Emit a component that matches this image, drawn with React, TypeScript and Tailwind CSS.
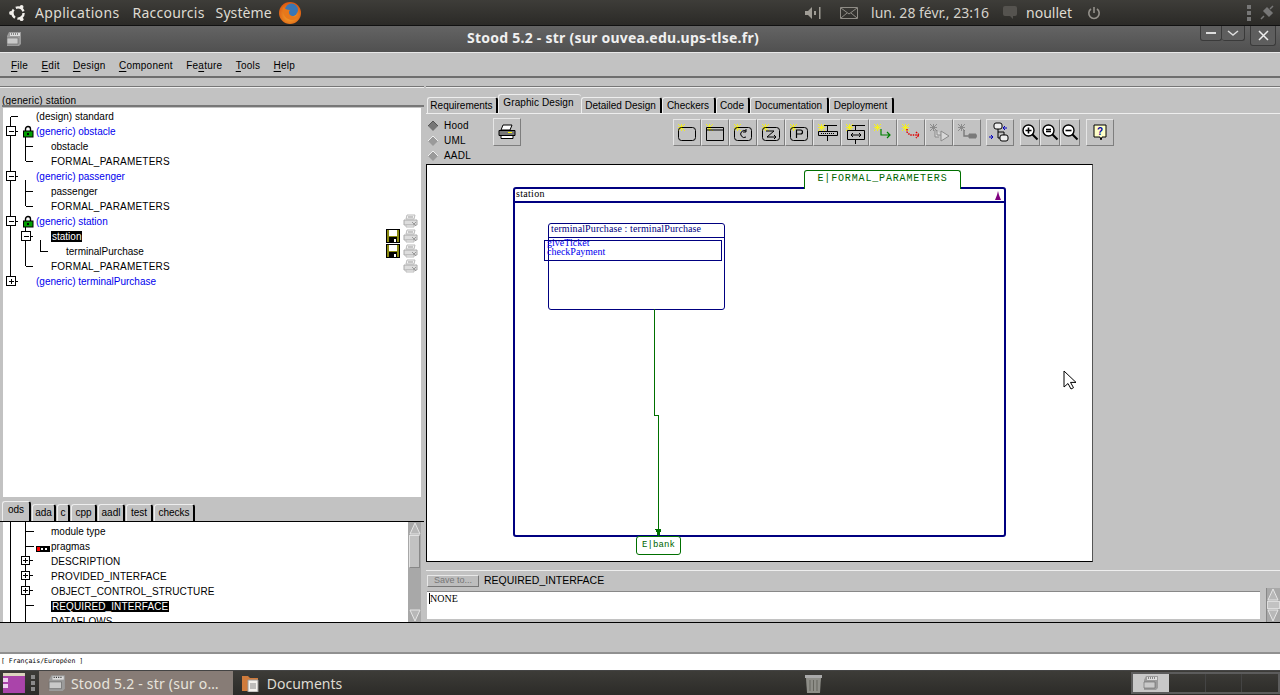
import type { ReactNode } from 'react'

const SANS = "font-['Liberation_Sans',sans-serif]"

const Ubuntu = () => (
  <svg width="20" height="20" viewBox="0 0 20 20" className="shrink-0">
    <circle cx="10" cy="10" r="5.6" fill="none" stroke="#f2f0ec" strokeWidth="2.4" strokeDasharray="9.2 2.53" />
    <circle cx="3" cy="10" r="1.9" fill="#f2f0ec" />
    <circle cx="13.6" cy="3.8" r="1.9" fill="#f2f0ec" />
    <circle cx="13.6" cy="16.2" r="1.9" fill="#f2f0ec" />
  </svg>
)

const Firefox = () => (
  <svg width="24" height="24" viewBox="0 0 24 24">
    <defs>
      <radialGradient id="ffo" cx="0.5" cy="0.6" r="0.6">
        <stop offset="0" stopColor="#f9b233" />
        <stop offset="1" stopColor="#d9540f" />
      </radialGradient>
    </defs>
    <circle cx="12" cy="12" r="11" fill="url(#ffo)" />
    <circle cx="13.5" cy="9" r="6.5" fill="#3a76b5" />
    <path d="M5 6c-1 5 1 12 8 13 5 .5 8-3 9-7-2 3-5 4-8 3-3-1-4-4-2-6-3 0-5-1-7-3z" fill="#e8781a" />
  </svg>
)

const TopPanel = () => (
  <div className="flex h-[26px] shrink-0 items-center border-b border-[#111] bg-gradient-to-b from-[#3e3d39] to-[#2b2a27] font-['Noto_Sans',sans-serif] text-[14px] text-[#dfdbd2]">
    <div className="ml-[8px]"><Ubuntu /></div>
    <span className="ml-[7px] tracking-[0.33px]">Applications</span>
    <span className="ml-[13px] tracking-[0.25px]">Raccourcis</span>
    <span className="ml-[11px] tracking-[0.1px]">Système</span>
    <div className="ml-[6px]"><Firefox /></div>
    <div className="ml-auto flex items-center">
      <svg width="16" height="14" viewBox="0 0 16 14" className="text-[#a09d96]">
        <path d="M0 5h3l4-4v12l-4-4H0zM9 5h2v4H9zM14 1h1.500v12H14z" fill="currentColor" />
      </svg>
      <svg width="18" height="12" viewBox="0 0 18 12" className="ml-[19px]">
        <path d="M.5.5h17v11H.500zM1 1l8 6 8-6M1 11l6-5M17 11l-6-5" fill="none" stroke="#8f8c86" />
      </svg>
      <span className="ml-[13px] text-[#d5d2cb]">lun. 28 févr., 23:16</span>
      <svg width="16" height="15" viewBox="0 0 16 15" className="ml-[13px]">
        <path d="M3 1h10a2 2 0 0 1 2 2v6a2 2 0 0 1-2 2h-2v3l-3-3H3a2 2 0 0 1-2-2V3a2 2 0 0 1 2-2z" fill="#55534f" />
      </svg>
      <span className="ml-[8px]">noullet</span>
      <svg width="14" height="14" viewBox="0 0 14 14" className="ml-[15px] mr-[5px]">
        <path d="M4 3a5.200 5.200 0 1 0 6 0M7 1v6" fill="none" stroke="#94918b" strokeWidth="1.600" />
      </svg>
      <div className="ml-[141px] mr-[5px] flex items-center gap-[8px]">
        <svg width="4" height="16" viewBox="0 0 4 16"><path d="M0 0h4v4H0zM0 6h4v4H0zM0 12h4v4H0z" fill="#777" /></svg>
        <svg width="16" height="16" viewBox="0 0 16 16">
          <path d="M2 14l3-3M5 6l5 5 3-3-5-5zM11 4l3-3" fill="#777" stroke="#777" strokeWidth="1.500" />
        </svg>
      </div>
    </div>
  </div>
)

const WindowIcon = ({ size = 16 }: { size?: number }) => (
  <svg width={size} height={size} viewBox="0 0 16 16">
    <path d="M3 1h12v12l-2 2H1V5z" fill="#9b9b9b" />
    <path d="M4 2h10v3H4z" fill="#ddd" />
    <path d="M5 3h8" stroke="#333" strokeDasharray="1 1" />
    <path d="M1 7h11v6H1z" fill="#c9c9c9" stroke="#666" strokeWidth=".6" />
  </svg>
)

const TitleBar = () => (
  <div className="relative flex h-[26px] shrink-0 items-center bg-gradient-to-b from-[#646464] to-[#505050]">
    <div className="ml-[6px]"><WindowIcon /></div>
    <span className="absolute left-0 right-[54px] top-[3px] text-center font-['Noto_Sans',sans-serif] text-[14px] font-bold leading-[18px] tracking-[0.24px] text-[#f0f0f0]">
      Stood 5.2 - str (sur ouvea.edu.ups-tlse.fr)
    </span>
    <div className="ml-auto mr-[4px] flex items-start self-start">
      <div className="flex h-[15px] w-[22px] items-center justify-center rounded-b-[3px] border border-t-0 border-[#3a3a3a] bg-[#5e5e5e]">
        <div className="h-[2px] w-[10px] bg-[#ddd]" />
      </div>
      <div className="flex h-[15px] w-[23px] items-center justify-center rounded-b-[3px] border border-l-0 border-t-0 border-[#3a3a3a] bg-[#5e5e5e]">
        <svg width="12" height="7" viewBox="0 0 12 7"><path d="M1 1l5 4 5-4" fill="none" stroke="#ddd" strokeWidth="1.500" /></svg>
      </div>
      <div className="ml-[5px] flex h-[20px] w-[26px] items-center justify-center rounded-b-[3px] border border-t-0 border-[#3a3a3a] bg-[#5e5e5e]">
        <svg width="11" height="11" viewBox="0 0 11 11"><path d="M1 1l9 9M10 1l-9 9" stroke="#eee" strokeWidth="1.500" /></svg>
      </div>
    </div>
  </div>
)

const MENUS: [string, string, string][] = [
  ['', 'F', 'ile'],
  ['', 'E', 'dit'],
  ['', 'D', 'esign'],
  ['', 'C', 'omponent'],
  ['Fe', 'a', 'ture'],
  ['', 'T', 'ools'],
  ['', 'H', 'elp'],
]

const MenuBar = () => (
  <div className="flex h-[26px] shrink-0 items-center gap-[13.300px] border-t border-[#e8e8e8] border-b-2 border-b-[#6e6e6e] bg-[#c2c2c2] pl-[11px] pt-[2px] text-[10px] tracking-[0.25px] text-black">
    {MENUS.map(([a, u, b]) => (
      <span key={u}>
        {a}
        <span className="underline underline-offset-2">{u}</span>
        {b}
      </span>
    ))}
  </div>
)

// arbre du haut : level donne le retrait du texte
const TREE = [
  { t: '(design) standard', l: 1 },
  { t: '(generic) obstacle', l: 1, blue: true },
  { t: 'obstacle', l: 2 },
  { t: 'FORMAL_PARAMETERS', l: 2, caps: true },
  { t: '(generic) passenger', l: 1, blue: true },
  { t: 'passenger', l: 2 },
  { t: 'FORMAL_PARAMETERS', l: 2, caps: true },
  { t: '(generic) station', l: 1, blue: true },
  { t: 'station', l: 2, sel: true },
  { t: 'terminalPurchase', l: 3 },
  { t: 'FORMAL_PARAMETERS', l: 2, caps: true },
  { t: '(generic) terminalPurchase', l: 1, blue: true },
]

const PADS: Record<number, string> = { 1: 'pl-[33px]', 2: 'pl-[48px]', 3: 'pl-[63px]' }

const TreeBox = ({ x, y, plus }: { x: number; y: number; plus?: boolean }) => (
  <g>
    <rect x={x - 4.5} y={y - 4.5} width="9" height="9" fill="#fff" stroke="#000" />
    <path d={`M${x - 2} ${y + 0.5}h5M${x + 5} ${y + 0.5}h2`} stroke="#000" />
    {plus && <path d={`M${x + 0.5} ${y - 2}v5`} stroke="#000" />}
  </g>
)

const Lock = ({ x, y }: { x: number; y: number }) => (
  <g transform={`translate(${x} ${y})`}>
    <path d="M2.500 5V3a2.500 2.500 0 0 1 5 0v2" fill="none" stroke="#000" strokeWidth="1.400" />
    <rect x="0.500" y="5" width="9.500" height="6" fill="#00a000" stroke="#000" />
    <path d="M4 7h2v2H4z" fill="#000" />
  </g>
)

const TreeLines = () => (
  <svg width="60" height="190" viewBox="0 0 60 190" className="absolute left-[-3px] top-0">
    <g shapeRendering="crispEdges" stroke="#000" fill="none">
      {/* coordonnees relatives au haut de l'arbre (y=108) */}
      <path d="M10.500 9v167M11 8.500h7" />
      <path d="M25.500 27v26M26 38.500h7M26 53.500h7" />
      <path d="M25.500 72v26M26 83.500h7M26 98.500h7" />
      <path d="M25.500 117v41M26 158.500h7M40.500 132v12M41 143.500h7" />
    </g>
    <g shapeRendering="crispEdges">
      <TreeBox x={11} y={23} />
      <TreeBox x={11} y={68} />
      <TreeBox x={11} y={113} />
      <TreeBox x={26} y={128} />
      <TreeBox x={11} y={173} plus />
    </g>
    <Lock x={23} y={18} />
    <Lock x={23} y={108} />
  </svg>
)

const Floppy = () => (
  <svg width="14" height="14" viewBox="0 0 14 14" shapeRendering="crispEdges">
    <path d="M0 0h14v14H0z" fill="#000" />
    <path d="M1 1h12v12H1z" fill="#8a8a10" />
    <path d="M3 1h8v6H3z" fill="#fff" />
    <path d="M3 8h8v5H3z" fill="#000" />
    <path d="M8 10h2v3H8z" fill="#fff" />
  </svg>
)

const GhostPrinter = () => (
  <svg width="15" height="14" viewBox="0 0 15 14">
    <path d="M4 1h8l-1 4H3z" fill="#f4f4f4" stroke="#bbb" />
    <path d="M1 6h13v5H1z" fill="#ddd" stroke="#aaa" />
    <path d="M5 3h5M9 8l4 4M13 8l-4 4" stroke="#999" />
    <path d="M3 11h8v2H3z" fill="#f4f4f4" stroke="#bbb" />
  </svg>
)

const Tree = () => (
  <div className="relative ml-[3px] h-[389px] w-[418px] shrink-0 overflow-hidden bg-white pt-px">
    <TreeLines />
    <div className="relative text-[10px] leading-[15px] text-black">
      {TREE.map((r, i) => (
        <div key={i} className={`h-[15px] whitespace-nowrap ${PADS[r.l]} ${r.blue ? 'text-[#0000ee]' : ''} ${r.caps ? 'tracking-[0.2px]' : ''}`}>
          <span className={r.sel ? 'bg-black px-[1px] text-white' : ''}>{r.t}</span>
        </div>
      ))}
    </div>
    <div className="absolute left-[400px] top-[106px] flex flex-col">
      {[0, 1, 2, 3].map((i) => (
        <div key={i} className="h-[15px]"><GhostPrinter /></div>
      ))}
    </div>
    <div className="absolute left-[383px] top-[121px] flex flex-col gap-px">
      <Floppy />
      <Floppy />
    </div>
  </div>
)

const SmallTab = ({ children, w, on }: { children: ReactNode; w: string; on?: boolean }) => (
  <div className={`flex ${w} items-center justify-center rounded-t-[3px] border-l border-t border-r-2 border-[#eee] border-r-black text-[10px] leading-none ${on ? 'h-[20px] border-r-[#888] pb-[3px]' : 'h-[17px]'}`}>
    {children}
  </div>
)

const LIST = [
  { t: 'module type', top: true },
  { t: 'pragmas', prag: true },
  { t: 'DESCRIPTION', plus: true },
  { t: 'PROVIDED_INTERFACE', plus: true },
  { t: 'OBJECT_CONTROL_STRUCTURE', plus: true },
  { t: 'REQUIRED_INTERFACE', sel: true },
  { t: 'DATAFLOWS' },
]

const ArrowBtn = ({ up }: { up?: boolean }) => (
  <svg width="12" height="13" viewBox="0 0 12 13" className="block shrink-0">
    <path d={up ? 'M6 1l5 11H1z' : 'M6 12L1 1h10z'} fill="#b8b8b8" stroke="#e6e6e6" />
  </svg>
)

const OdsList = () => (
  <div className="flex h-[100px] shrink-0 overflow-hidden pl-[3px]">
    <div className="relative w-[405px] overflow-hidden bg-white text-[10px] leading-[15px] text-black">
      <svg width="50" height="100" viewBox="0 0 50 100" className="absolute left-0 top-0" shapeRendering="crispEdges">
        <path d="M7.500 0v100M22.500 0v100M23 9.500h8M23 24.500h8M23 83.500h8" stroke="#000" fill="none" />
        {[39, 54, 69].map((y) => (
          <g key={y}>
            <rect x="18.500" y={y - 4.500} width="8" height="8" fill="#fff" stroke="#000" />
            <path d={`M20 ${y - 0.500}h5M22.500 ${y - 3}v5M27 ${y - 0.500}h3`} stroke="#000" />
          </g>
        ))}
      </svg>
      <svg width="14" height="6" viewBox="0 0 14 6" className="absolute left-[33px] top-[24px]" shapeRendering="crispEdges">
        <path d="M0 0h14v6H0z" fill="#000" />
        <path d="M1 1h3v4H1z" fill="#f00" />
        <path d="M5 2h2v2H5zM9 2h2v2H9z" fill="#fff" />
      </svg>
      <div className="relative pt-[2px] pl-[48px]">
        {LIST.map((r) => (
          <div key={r.t} className={`h-[15px] whitespace-nowrap ${r.t === r.t.toUpperCase() ? 'tracking-[0.1px]' : ''}`}>
            <span className={r.sel ? 'bg-black px-[1px] text-white' : ''}>{r.t}</span>
          </div>
        ))}
      </div>
    </div>
    <div className="flex w-[13px] flex-col bg-[#a8a8a8] pl-px">
      <ArrowBtn up />
      <div className="h-[33px] w-[11px] border border-[#e2e2e2] border-r-[#888] border-b-[#888] bg-[#c2c2c2]" />
      <div className="flex-1" />
      <ArrowBtn />
    </div>
  </div>
)

const LeftPane = () => (
  <div className="flex w-[424px] shrink-0 flex-col">
    <div className="mt-[8px] h-[2px] border-t border-[#767676] border-b border-b-[#eee]" />
    <div className="h-[17px] pl-[2px] pt-[5px] text-[10px] leading-[15px] tracking-[0.15px]">(generic) station</div>
    <div className="ml-[2px] h-[3px] border-t-2 border-[#777]" />
    <Tree />
    <div className="flex h-[25px] shrink-0 items-end gap-px border-b border-black pl-[2px]">
      <SmallTab w="w-[29px]" on>ods</SmallTab>
      <SmallTab w="w-[24px]">ada</SmallTab>
      <SmallTab w="w-[13px]">c</SmallTab>
      <SmallTab w="w-[26px]">cpp</SmallTab>
      <SmallTab w="w-[27px]">aadl</SmallTab>
      <SmallTab w="w-[27px]">test</SmallTab>
      <SmallTab w="w-[41px]">checks</SmallTab>
    </div>
    <OdsList />
  </div>
)

const TABS: [string, number, boolean?][] = [
  ['Requirements', 71],
  ['Graphic Design', 83, true],
  ['Detailed Design', 81],
  ['Checkers', 54],
  ['Code', 34],
  ['Documentation', 79],
  ['Deployment', 65],
]

const Star = ({ off }: { off?: boolean }) => (
  <path d="M5 5l7 7M12 5l-7 7M8.500 5v7M5 8.500h7" stroke={off ? '#8c8c8c' : '#f4f020'} strokeWidth="1" />
)

const K = '#000'

// dessin de chaque bouton, coordonnees 28x28
const ICONS: ReactNode[] = [
  <rect key="a" x="5.500" y="8.500" width="17" height="13" rx="3" fill="none" stroke={K} />,
  <path key="b" d="M5.500 8.500h17v13h-17zM5.500 11h17" fill="none" stroke={K} />,
  <g key="c" fill="none" stroke={K}><rect x="5.500" y="8.500" width="17" height="13" rx="3" /><path d="M17 12a3.500 3.500 0 1 0 0 6M17 10v3h-3" /></g>,
  <g key="d" fill="none" stroke={K}><rect x="5.500" y="8.500" width="17" height="13" rx="3" /><path d="M9 12h8l-7 6h9M17 16l2 2-2 2" /></g>,
  <g key="e" fill="none" stroke={K}><rect x="5.500" y="8.500" width="17" height="13" rx="3" /><path d="M11.500 19v-8h4a2 2 0 0 1 0 4h-4" strokeWidth="1.200" /></g>,
  <g key="f" fill="none" stroke={K}><path d="M11 6.500h13M5.500 12.500h19v4h-19zM14.500 7v5M14.500 17v5" /><path d="M8 14.500h14" strokeDasharray="1 1" /></g>,
  <g key="g" fill="none" stroke={K}><path d="M11 6.500h13M6.500 11.500h17v9h-17zM14.500 7v4M14.500 21v4M10 16h10M12 14l-2 2 2 2M18 14l2 2-2 2" /></g>,
  <path key="h" d="M12 10v6h9M18 13l3 3-3 3" fill="none" stroke="#008000" strokeWidth="1.200" />,
  <path key="i" d="M10 10v3l3 3h9M19 13l3 3-3 3" fill="none" stroke="#e00000" strokeWidth="1.500" strokeDasharray="1.500 1" />,
  <g key="j" fill="none" stroke="#8a8a8a"><path d="M10 11v7h4M12 11v5h4M16 12l8 5-8 5z" fill="#d8d8d8" /></g>,
  <g key="k" stroke="#7a7a7a"><path d="M11 11v6h13" fill="none" strokeWidth="1.400" /><path d="M16 15h7v4h-7z" fill="#7a7a7a" /></g>,
]

const ToolBtn = ({ children, w = 'w-[28px]' }: { children: ReactNode; w?: string }) => (
  <div className={`h-[27px] ${w} shrink-0 border border-[#e6e6e6] border-b-[#7e7e7e] border-r-[#7e7e7e]`}>
    <svg width="100%" height="100%" viewBox="0 0 26 25">{children}</svg>
  </div>
)

const Zoom = ({ mark }: { mark: string }) => (
  <div className="h-[27px] w-[20px] shrink-0 border border-[#e6e6e6] border-b-[#7e7e7e] border-r-[#7e7e7e]">
    <svg width="18" height="25" viewBox="0 0 18 25">
      <circle cx="7.500" cy="10.500" r="5.500" fill="#fff" stroke="#000" strokeWidth="1.400" />
      <path d={mark} stroke="#000" strokeWidth="1.600" />
      <path d="M11.500 14.500l5 5" stroke="#000" strokeWidth="2" />
    </svg>
  </div>
)

const Radio = ({ label, on }: { label: string; on?: boolean }) => (
  <div className="flex h-[15px] items-center">
    <svg width="12" height="12" viewBox="0 0 12 12" className="ml-px">
      <path d="M6 1l5 5-5 5-5-5z" fill={on ? '#777' : '#9a9a9a'} />
      <path d="M1 6l5-5 5 5" fill="none" stroke={on ? '#555' : '#eee'} />
    </svg>
    <span className="ml-[5px] text-[10px] tracking-[0.2px]">{label}</span>
  </div>
)

const Toolbar = () => (
  <div className="flex h-[50px] shrink-0 items-start">
    <div className="w-[67px] pt-[4px]">
      <Radio label="Hood" on />
      <Radio label="UML" />
      <Radio label="AADL" />
    </div>
    <div className="mt-[4px]">
      <div className="flex h-[28px] w-[28px] items-center justify-center border border-[#e6e6e6] border-b-[#7e7e7e] border-r-[#7e7e7e]">
        <svg width="18" height="16" viewBox="0 0 18 16">
          <path d="M5 1h9l-2 5H3z" fill="#fff" stroke="#000" />
          <path d="M1 6.500h16v5H1z" fill="#777" stroke="#000" />
          <path d="M3 11.500h12v3H3z" fill="#fff" stroke="#000" />
          <path d="M10 8.500h4" stroke="#ff0" />
        </svg>
      </div>
    </div>
    <div className="ml-[152px] mt-[5px] flex">
      {ICONS.map((ic, i) => (
        <ToolBtn key={i}>
          <g transform="translate(-1 -1)">
            <Star off={i >= 9} />
            {ic}
          </g>
        </ToolBtn>
      ))}
    </div>
    <div className="ml-[5px] mt-[5px]">
      <ToolBtn>
        <g fill="none" stroke="#000">
          <rect x="7" y="3" width="8" height="6" rx="2" fill="#eee" />
          <rect x="13" y="15" width="8" height="6" rx="2" fill="#eee" />
          <path d="M11 9v9h2M11 12h6M17 12v3" />
          <path d="M20 8h-4M18 6l-2 2 2 2M2 17h4M4 15l2 2-2 2" stroke="#0000c0" />
        </g>
      </ToolBtn>
    </div>
    <div className="ml-[6px] mt-[5px] flex">
      <Zoom mark="M4.500 10.500h6M7.500 7.500v6" />
      <Zoom mark="M5 9.500h5M5 11.500h5" />
      <Zoom mark="M4.500 10.500h6" />
    </div>
    <div className="ml-[6px] mt-[5px]">
      <ToolBtn>
        <path d="M7 5h12v12h-4l-1 3-1-3H7z" fill="#ffffc8" stroke="#000" />
        <text x="10" y="15" fontSize="10" fontWeight="700" fill="#0000a0" fontFamily="'Liberation Sans', sans-serif">?</text>
      </ToolBtn>
    </div>
  </div>
)

const Cursor = () => (
  <svg width="14" height="20" viewBox="0 0 14 20" className="absolute left-[636px] top-[205px]">
    <path d="M1 1v16l4-3.500 3 5.500 2.500-1.300-3-5.300H13z" fill="#fff" stroke="#000" />
  </svg>
)

const NAVY = 'border-[#000080]'

const Diagram = () => (
  <div className={`relative h-[398px] w-[667px] shrink-0 overflow-hidden border border-r-[#555] border-black bg-white font-['Liberation_Serif',serif]`}>
    {/* boite station */}
    <div className={`absolute left-[86px] top-[22px] h-[350px] w-[493px] rounded-[3px] border-2 ${NAVY}`}>
      <div className={`h-[14px] border-b-2 ${NAVY} pl-[1px] text-[10px] leading-[9px] tracking-[0.3px] text-black`}>station</div>
      <svg width="8" height="10" viewBox="0 0 8 10" className="absolute right-[2px] top-[2px]">
        <path d="M4 0l1 4 2 5H1l2-5z" fill="#800080" />
      </svg>
    </div>
    <div className="absolute left-[377px] top-[5px] flex h-[19px] w-[157px] justify-center rounded-[3px] rounded-b-none border border-b-0 border-[#006f00] bg-white font-['Liberation_Mono',monospace] text-[10px] leading-[15px] tracking-[0.84px] text-[#006400]">
      E|FORMAL_PARAMETERS
    </div>
    {/* terminalPurchase */}
    <div className={`absolute left-[121px] top-[58px] h-[87px] w-[177px] rounded-[3px] border ${NAVY}`}>
      <div className={`h-[14px] border-b ${NAVY} pl-[2px] text-[10px] leading-[10px] tracking-[0.1px] text-[#000080]`}>
        terminalPurchase : terminalPurchase
      </div>
    </div>
    <div className={`absolute left-[117px] top-[75px] h-[21px] w-[178px] border ${NAVY} pl-[2px] text-[10px] leading-[9px] text-[#0000ee]`}>
      <div className="-mt-[3px]">giveTicket</div>
      <div>checkPayment</div>
    </div>
    <svg width="12" height="235" viewBox="0 0 12 235" className="absolute left-[222px] top-[144px]" shapeRendering="crispEdges">
      <path d="M5.500 0v106h4v122" fill="none" stroke="#007000" />
      <path d="M6 220h7l-3.500 8z" fill="#007000" />
    </svg>
    <div className="absolute left-[209px] top-[371px] flex h-[19px] w-[45px] justify-center rounded-[3px] border border-[#006f00] bg-white font-['Liberation_Mono',monospace] text-[9px] leading-[16px] tracking-[0.1px] text-[#006400]">
      E|bank
    </div>
    <Cursor />
  </div>
)

const RightPane = () => (
  <div className="flex min-w-0 flex-1 flex-col pl-[2px]">
    <div className="mt-[8px] h-[2px] shrink-0 border-t border-[#767676] border-b border-b-[#eee]" />
    <div className="flex h-[26px] shrink-0 items-end border-b border-[#eee] pl-px">
      {TABS.map(([t, w, on]) => (
        <div
          key={t}
          style={{ width: w }}
          className={`flex items-center justify-center rounded-t-[3px] border-l border-t border-[#eee] text-[10px] ${on ? 'h-[19px] pb-[3px] pr-[3px] tracking-[0.1px]' : 'h-[16px] border-r-2 border-r-black pr-[1px]'}`}
        >
          {t}
        </div>
      ))}
    </div>
    <Toolbar />
    <Diagram />
    <div className="mt-[8px] h-px shrink-0 bg-[#eee]" />
    <div className="flex h-[20px] shrink-0 items-center pl-px">
      <div className="flex h-[12px] w-[52px] items-center justify-center border border-[#e8e8e8] border-b-[#777] border-r-[#777] bg-[#bdbdbd] text-[9px] text-[#777]">
        Save to...
      </div>
      <span className="ml-[5px] text-[10.500px]">REQUIRED_INTERFACE</span>
    </div>
    <div className="flex min-h-0 flex-1 pl-px">
      <div className="h-[28px] w-[833px] border-t border-[#888] bg-white pl-[2px] font-['Liberation_Serif',serif] text-[10px] leading-[14px]">
        <span className="border-l border-black">NONE</span>
      </div>
      <div className="ml-[6px] -mt-[3px] flex h-[34px] w-[14px] flex-col border-l border-[#888] bg-[#a8a8a8]">
        <ArrowBtn up />
        <div className="h-[8px] border border-[#ddd] bg-[#c2c2c2]" />
        <ArrowBtn />
      </div>
    </div>
  </div>
)

const Status = () => (
  <div className="flex h-[32px] shrink-0 flex-col">
    <div className="h-[30px] border-t border-black bg-[#c2c2c2]" />
    <div className="h-[2px] bg-[#909090]" />
  </div>
)

const Taskbar = () => (
  <div className="flex h-[25px] shrink-0 items-center border-t border-[#444] bg-gradient-to-b from-[#3d3c38] to-[#2c2b28] font-['Noto_Sans',sans-serif] text-[14px] text-[#dfdbd2]">
    <svg width="22" height="20" viewBox="0 0 22 20" className="ml-[3px]">
      <path d="M0 0h22v20H0z" fill="#aa44aa" />
      <path d="M0 0h22v3H0z" fill="#ddd6c0" />
      <path d="M0 5h5v4H0zM0 11h5v4H0z" fill="#f0d0f0" />
    </svg>
    <svg width="4" height="16" viewBox="0 0 4 16" className="ml-[6px]">
      <path d="M0 0h4v4H0zM0 6h4v4H0zM0 12h4v4H0z" fill="#8a8a8a" />
    </svg>
    <div className="ml-[4px] flex h-[24px] w-[194px] items-center bg-[#877c76] pl-[9px] text-[#e8e4dc]">
      <WindowIcon size={18} />
      <span className="ml-[5px] tracking-[0.2px]">Stood 5.2 - str (sur o…</span>
    </div>
    <svg width="17" height="17" viewBox="0 0 17 17" className="ml-[9px]">
      <path d="M0 1h6l2 2h8v13H0z" fill="#cf7b3c" />
      <path d="M6 5h10v12H6z" fill="#f4f2ee" stroke="#999" />
      <path d="M8 9h6M8 11h6M8 13h6" stroke="#888" />
    </svg>
    <span className="ml-[8px]">Documents</span>
    <svg width="19" height="21" viewBox="0 0 19 21" className="ml-[462px]">
      <path d="M1 2h17v3H1z" fill="#aaa" />
      <path d="M2 5h15l-1 15H3z" fill="#8e8e88" />
      <path d="M6 7v11M9.500 7v11M13 7v11" stroke="#66665f" />
    </svg>
    <div className="ml-[308px] flex h-[22px] w-[149px] border-2 border-[#5c5c5c]">
      <div className="flex w-[36px] items-center justify-center bg-[#c8c8c8]"><WindowIcon size={16} /></div>
      <div className="flex-1 border-r border-[#444]" />
      <div className="flex-1 border-r border-[#444]" />
      <div className="flex-1" />
    </div>
  </div>
)

export default function App() {
  return (
    <div className={`${SANS} flex h-[695px] w-[1280px] flex-col overflow-hidden bg-[#c2c2c2] text-black`}>
      <TopPanel />
      <TitleBar />
      <MenuBar />
      <div className="flex h-[544px] shrink-0 overflow-hidden">
        <LeftPane />
        <RightPane />
      </div>
      <Status />
      <div className="flex h-[16px] shrink-0 items-center bg-white pb-px pl-px font-['DejaVu_Sans_Mono',monospace] text-[6.500px] text-black">
        [ Français/Européen ]
      </div>
      <Taskbar />
    </div>
  )
}
